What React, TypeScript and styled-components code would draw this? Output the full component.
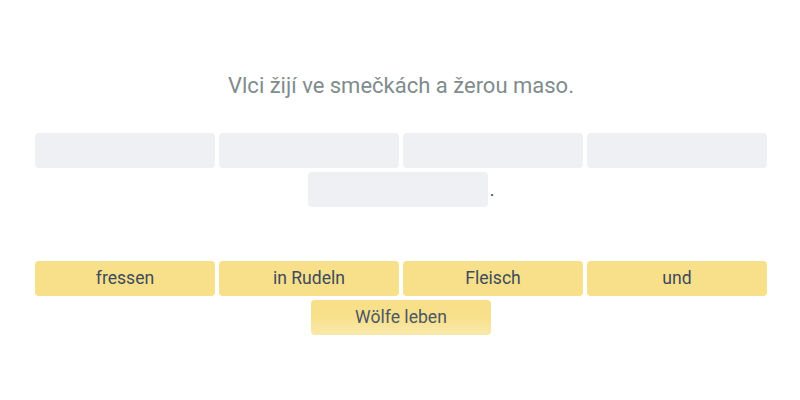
import React from "react";
import styled, { createGlobalStyle } from "styled-components";

const Global = createGlobalStyle`
  html, body { margin: 0; padding: 0; background: #ffffff; }
  body { font-family: Roboto, "Noto Sans", sans-serif; }
`;

const Page = styled.div`
  width: 800px;
  height: 400px;
  display: flex;
  flex-direction: column;
  align-items: center;
  box-sizing: border-box;
  padding-top: 71px;
`;

const Prompt = styled.div`
  font-size: 22px;
  line-height: 30px;
  color: #7f8c8d;
  text-align: center;
  margin-left: 2px;
`;

const Rows = styled.div<{ $top: number }>`
  width: 736px;
  margin-left: 2px;
  margin-top: ${(p) => p.$top}px;
  display: flex;
  flex-wrap: wrap;
  justify-content: center;
  align-items: center;
`;

const Cell = styled.div`
  display: flex;
  align-items: center;
  margin: 2px;
`;

const Slot = styled.div`
  width: 180px;
  height: 35px;
  border-radius: 4px;
  background: #eff0f4;
`;

const Dot = styled.span`
  font-size: 18px;
  line-height: 20px;
  color: #3d4b5c;
  margin-left: 2px;
`;

const Word = styled.button<{ $hover?: boolean }>`
  width: 180px;
  height: 35px;
  margin: 2px;
  border: none;
  border-radius: 4px;
  padding: 0 0 2px 0;
  font-family: Roboto, sans-serif;
  font-size: 17.6px;
  color: ${(p) => (p.$hover ? "#4a5666" : "#3d4b5c")};
  background: ${(p) =>
    p.$hover
      ? "linear-gradient(to bottom, #f8e08a 0%, #f8e08a 45%, #f9e8ac 100%)"
      : "#f8e08a"};
  cursor: pointer;
`;

const slots = 5;
const words = ["fressen", "in Rudeln", "Fleisch", "und", "Wölfe leben"];

export default function App() {
  return (
    <>
      <Global />
      <Page>
        <Prompt>Vlci žijí ve smečkách a žerou maso.</Prompt>
        <Rows $top={30}>
          {Array.from({ length: slots }).map((_, i) => (
            <Cell key={i}>
              <Slot />
              {i === slots - 1 && <Dot>.</Dot>}
            </Cell>
          ))}
        </Rows>
        <Rows $top={50}>
          {words.map((w, i) => (
            <Word key={w} $hover={i === words.length - 1}>
              {w}
            </Word>
          ))}
        </Rows>
      </Page>
    </>
  );
}
